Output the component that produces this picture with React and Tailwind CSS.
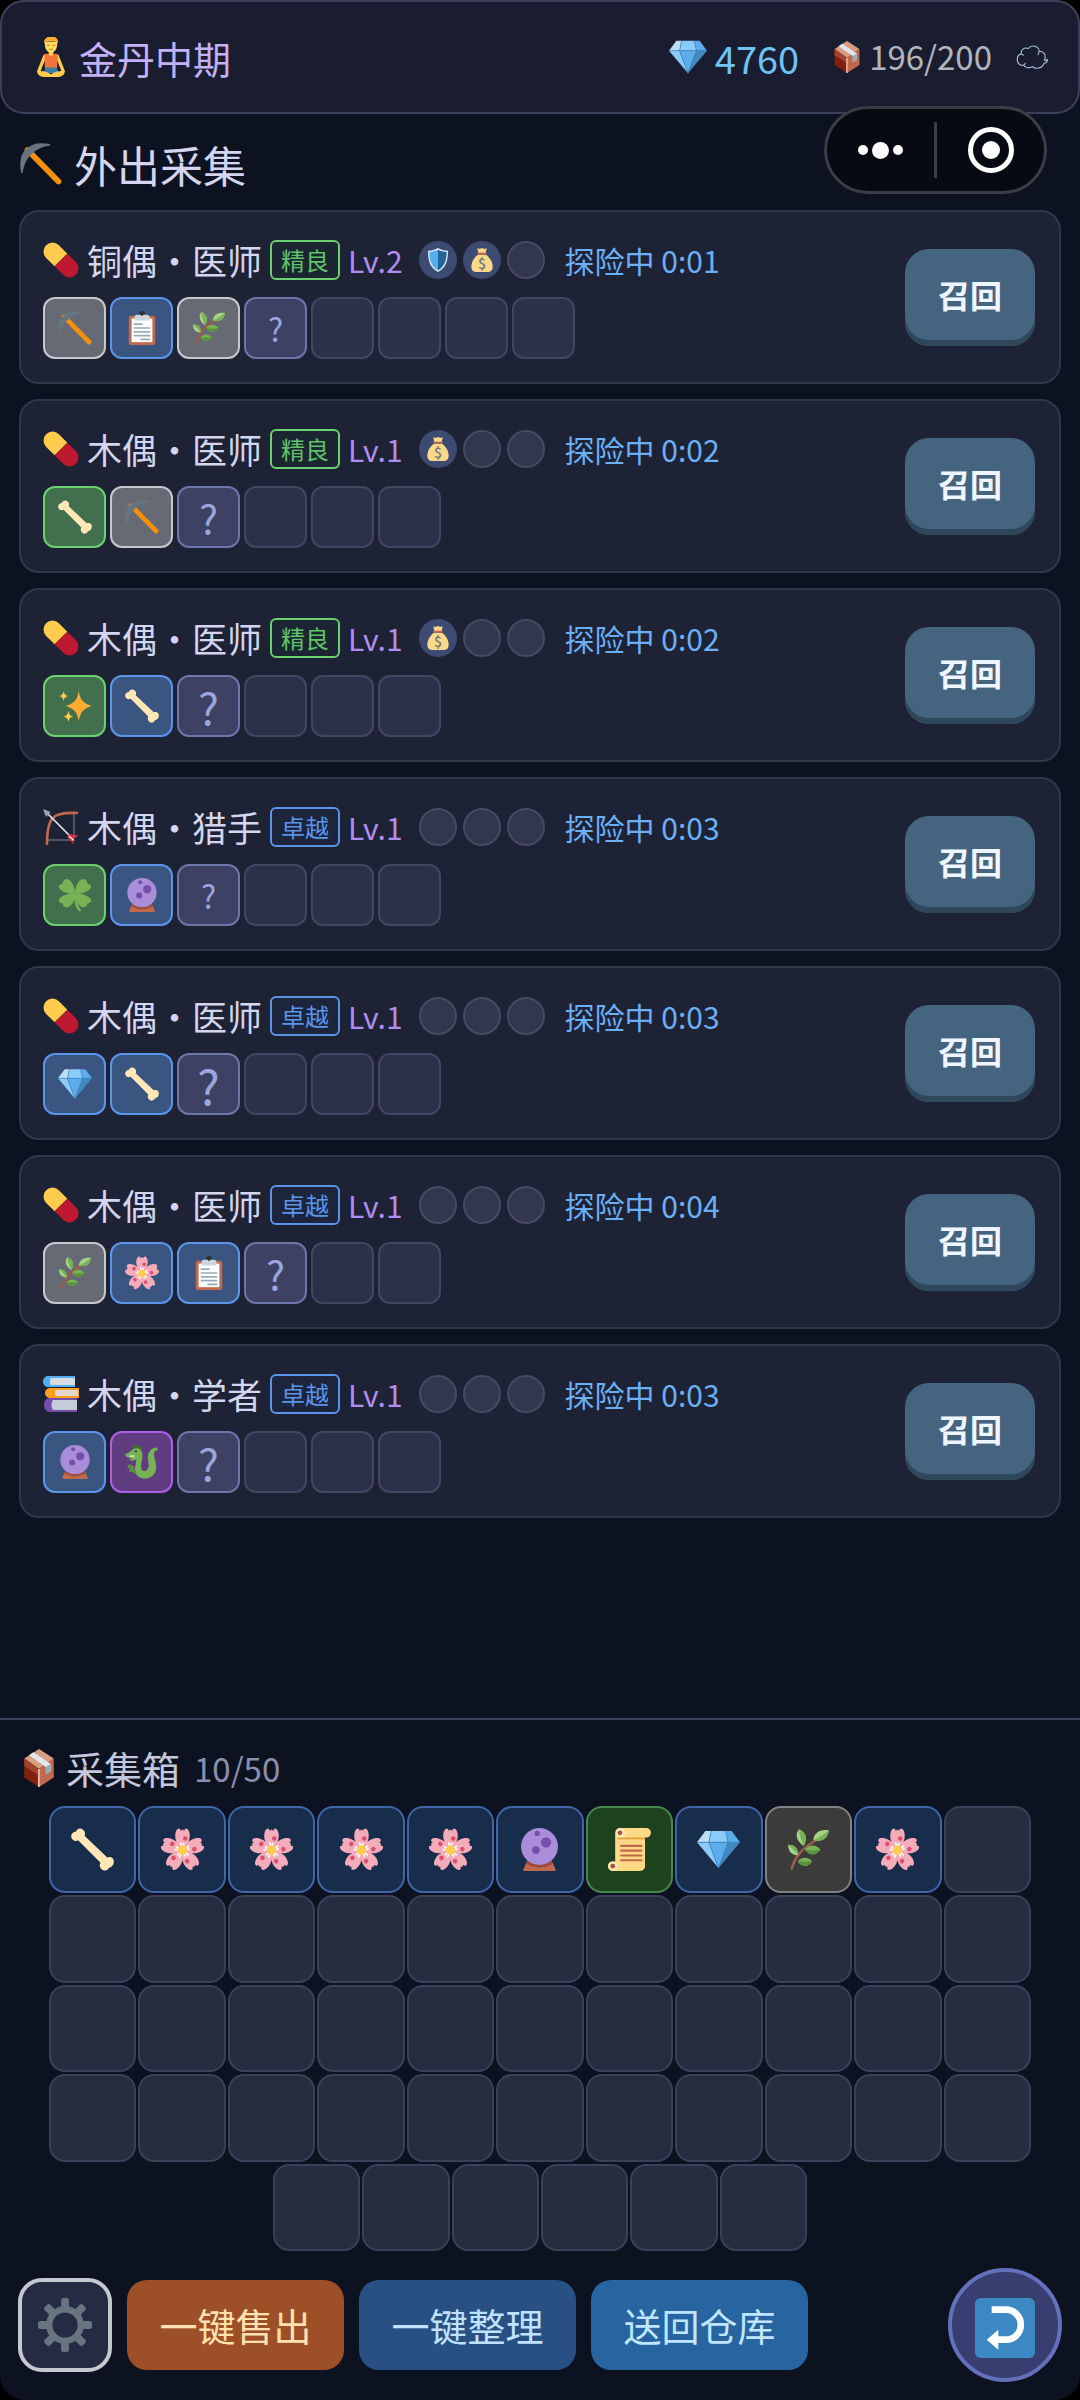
import React from "react";
import clsx from "clsx";

const PillIcon = () => (
  <g transform="rotate(45 18 18)">
    <path fill="#ffcc4d" d="M-3 18a9 9 0 0 1 9-9h12v18H6a9 9 0 0 1-9-9z" />
    <path fill="#be1931" d="M18 9h12a9 9 0 0 1 0 18H18z" />
  </g>
);

const PickaxeIcon = () => (
  <>
    <path stroke="#f4900c" strokeWidth="5" strokeLinecap="round" d="M6.500 6 33 33" />
    <path fill="#66757f" d="M25.500.9C17-.6 10.200.5 6.300 4.300L4.300 6.300C.5 10.200-.6 17 .9 25.500c.1.700 1.200.7 1.300 0 .9-6.200 3.300-11.300 6.500-14.700l2.100-2.100c3.400-3.200 8.500-5.600 14.700-6.500.7-.1.700-1.200 0-1.300z" />
  </>
);

const ClipboardIcon = () => (
  <>
    <rect x="4" y="5" width="28" height="31" rx="2" fill="#c1694f" />
    <path fill="#fff" d="M7 8h22v25H7z" />
    <circle cx="18" cy="3" r="3" fill="#292f33" />
    <circle cx="18" cy="2.500" r="1" fill="#99aab5" />
    <path fill="#ccd6dd" d="M13 4h10a3 3 0 0 1 3 3v3H10V7a3 3 0 0 1 3-3z" />
    <path fill="#292f33" d="M17 1h2v4h-2z" />
    <path stroke="#99aab5" strokeWidth="1.800" strokeLinecap="round" d="M10 14h8M10 18h16M10 22h16M10 26h16M17 30h9" />
  </>
);

const HerbIcon = () => (
  <>
    <path fill="none" stroke="#9d5b4a" strokeWidth="2.200" strokeLinecap="round" d="M4 34c3-11 9-17 22-25" />
    <path fill="#a6d388" d="M14 15C7 10 7 5 10 1c5 2 8 7 4 14zM22 10C23 3 29 1 35 2c-1 7-6 10-13 8zM9 23c-6-1-8-4-8-9 6 0 9 4 8 9z" />
    <path fill="#77b255" d="M14 15c-2-5-4-9-4-14 5 2 8 7 4 14zM22 10c5-2 9-5 13-8-1 7-6 10-13 8zM9 23c-2-4-5-6-8-9 6 0 9 4 8 9z" />
    <path fill="#77b255" d="M15 18c3-4 9-5 13 0-4 6-10 5-13 0z" />
    <path fill="#5c913b" d="M15 18c4 1 8 1 13 0-4 6-10 5-13 0z" />
    <path fill="#77b255" d="M9 28c3-4 9-4 12 0-3 5-9 5-12 0z" />
    <path fill="#5c913b" d="M9 28h12c-3 5-9 5-12 0z" />
  </>
);

const BoneIcon = () => (
  <path
    fill="#ffe8b6"
    d="M35.300 25.900c-1.300-1.800-3.400-1.900-4.900-1.200L11.300 6.500c.8-1.600.6-3.500-1-4.900C8.200-.3 5 .4 4.300 2.900 1.700 3.100-.4 5.400.3 8c.7 2.500 3.700 3.500 5.700 2.300L24.700 29c-1 1.700-.9 4.100 1.100 5.700 2.100 1.700 5.200.9 5.900-1.500 3-.2 5.200-4.100 3.600-7.300z"
  />
);

const SparklesIcon = () => (
  <>
    <path fill="#ffac33" d="M22 2c1.500 9 4 12.500 13.500 16C26 21.500 23.500 25 22 34c-1.500-9-4-12.500-13.500-16C18 14.500 20.500 11 22 2z" />
    <path fill="#ffcc4d" d="M6 2c.7 3.500 1.500 4.500 5 5.500-3.500 1-4.300 2-5 5.500-.7-3.500-1.500-4.500-5-5.500 3.500-1 4.300-2 5-5.500zM11 23c.7 4 1.700 5 5 6-3.300 1-4.300 2-5 6-.7-4-1.700-5-5-6 3.300-1 4.300-2 5-6z" />
  </>
);

const CloverIcon = () => (
  <>
    <path fill="none" stroke="#77b255" strokeWidth="2.600" strokeLinecap="round" d="M18 17c0 7 1 13 5 17" />
    <path fill="#77b255" d="M18 17C12 17 4 15 1 10c-.5-2 1-3.500 4-4 0-3 2-5 4.500-5C15 2 18 10 18 17zM18 17c6 0 14-2 17-7 .5-2-1-3.500-4-4 0-3-2-5-4.500-5C21 2 18 10 18 17zM18 17C12 16 4 18 1 23c-.5 2 1 3.500 4 4 0 3 2 4 4.500 4C15 30 18 24 18 17zM18 17c6-1 14 1 17 6 .5 2-1 3.500-4 4 0 3-2 4-4.500 4C21 30 18 24 18 17z" />
  </>
);

const OrbIcon = () => (
  <>
    <path fill="#c1694f" d="M8 27h20l3.500 7.500c.3.800-.2 1.500-1 1.500h-25c-.8 0-1.300-.7-1-1.500z" />
    <path fill="#9d4a3a" d="M8 27h20l1 3c-6 4-16 4-22 0z" />
    <circle cx="18" cy="15.500" r="15.500" fill="#aa8dd8" />
    <circle cx="23.500" cy="12" r="4.300" fill="#744eaa" />
    <circle cx="15" cy="18.500" r="3.200" fill="#744eaa" />
    <circle cx="16" cy="4.500" r="2.200" fill="#744eaa" />
  </>
);

const GemIcon = () => (
  <>
    <path fill="#bdddf4" d="M7 2.500h5L10 12H0z" />
    <path fill="#8ccaf7" d="M12 2.500h12L26 12H10z" />
    <path fill="#5dadec" d="M24 2.500h5L36 12H26z" />
    <path fill="#8ccaf7" d="M0 12h10l8 21.500z" />
    <path fill="#5dadec" d="M10 12h16l-8 21.500z" />
    <path fill="#4289c1" d="M26 12h10L18 33.500z" />
    <path fill="none" stroke="#3b88c3" strokeWidth=".7" d="M0 12h36M12 2.500 10 12l8 21.500L26 12l-2-9.500" />
  </>
);

const FlowerIcon = () => (
  <>
    {[0, 72, 144, 216, 288].map((deg) => (
      <g key={deg} transform={`rotate(${deg} 18 18.500)`}>
        <path fill="#f4abba" d="M18 18.500C13 14 11.500 9 12 5c.3-2.500 1.500-4.500 3-4.500 1 0 1.200 1 1.500 1.800L18 1.300l1.500 1c.3-.8.500-1.800 1.500-1.800 1.500 0 2.700 2 3 4.500.5 4-1 9-6 13.500z" />
        <path stroke="#fff" strokeWidth="1.400" strokeLinecap="round" d="M16.500 12.500 18 18M19 13l-1 5" />
        <circle cx="20.300" cy="8.800" r="1.900" fill="#dd4d6c" />
      </g>
    ))}
    <circle cx="18" cy="18.500" r="4" fill="#ffcc4d" />
  </>
);

const ScrollIcon = () => (
  <>
    <path fill="#ffd983" d="M6 4a4 4 0 0 1 4-4h22a4 4 0 0 1 0 8h-1v24a4 4 0 0 1-4 4H4a4 4 0 0 1 0-8h2z" />
    <path fill="#e39f3d" d="M8 8h23v1.500H8z" />
    <circle cx="4" cy="32" r="4" fill="#ffe8b6" />
    <circle cx="4" cy="32" r="2" fill="#a0584a" />
    <circle cx="10.500" cy="4" r="4" fill="#ffe8b6" />
    <circle cx="10" cy="4" r="2" fill="#a0584a" />
    <path stroke="#c1694f" strokeWidth="1.800" strokeLinecap="round" d="M11 15h17M11 19h17M11 23h17M11 27h17" />
  </>
);

const DragonIcon = () => (
  <>
    <path fill="none" stroke="#3e721d" strokeWidth="2.400" strokeLinejoin="round" d="M9 5l1-4 3 2 3-1 1 3" />
    <path fill="#77b255" d="M0 10C3 9 5 7 8 5c5-3.500 10-1 10.500 5 .4 5-2 9-1.500 14 .4 3 3 4.500 5.500 3 3-2 3-6 2-10-1-5 0-11 6-14 2-1 4 0 4.500 2-4 1-5 4-4 8 3 10 3 17-4 21-6 3.500-14 1-16-5-1.500-5 1-9 1-14-2 1.500-5 2-8 1l4-2c-4 0-7-1-8-4z" />
    <path fill="#5c913b" d="M5 20l5 3-1 3 3 1-1 4-4-3-3 1 1-4-3-2z" />
    <path fill="#fff" d="M5 11h5l-1 2.500-1.500-2L6.500 13.500z" />
    <path fill="#292f33" d="M9 6.500l4-1-1 2.500z" />
  </>
);

const BowIcon = () => (
  <>
    <path fill="none" stroke="#9aa5ad" strokeWidth=".8" d="M31 4v24M4 31h26" />
    <path fill="none" stroke="#c1694f" strokeWidth="2.600" strokeLinecap="round" d="M34 4C20 3.500 13 5 10 9c-4 4-6 12-6 26" />
    <path stroke="#dfe6ea" strokeWidth="1.700" d="M3 3l27 27" />
    <path fill="#99aab5" d="M0 0l7.500 3L3 8z" />
    <path fill="#dd2e44" d="M25 26l2-1 3 1 5.500.5-5 3.500-.500 5-3-4-3-3z" />
    <path stroke="#fff" strokeWidth="1.200" d="M26 27l5 4.500" />
  </>
);

const BooksIcon = () => (
  <>
    <path fill="#55acee" d="M5 0h27v11H5C2 11 0 8.500 0 5.500S2 0 5 0z" />
    <path fill="#d3dde3" d="M8 2h24v7H8c-1.500-2-1.500-5 0-7z" />
    <path fill="#ff9d1c" d="M7 12h29v10H7c-3 0-5-2.500-5-5s2-5 5-5z" />
    <path fill="#e1d8d0" d="M13 14h22v6H13c-1.500-1.500-1.500-4.500 0-6z" />
    <path fill="#744eaa" d="M7 22h27v14H7c-4 0-6-3.500-6-7s2-7 6-7z" />
    <path fill="#c3ccd8" d="M10 24h24v10H10c-2-2.500-2-7.500 0-10z" />
  </>
);

const BoxIcon = () => (
  <>
    <path fill="#d99e82" d="M18 0l14 9-14 10L4 9z" />
    <path fill="#80210f" d="M4 9l14 10v17L4 27z" />
    <path fill="#c1694f" d="M32 9L18 19v17l14-9z" />
    <path fill="#a3432d" d="M4 9l14 10v6L4 16z" />
    <path fill="#e8b59f" d="M17 19h1.800v17H17z" />
    <path fill="#e1e8ed" d="M8.500 6l4-3L29 14v7l-4.500 3v-7z" />
    <path fill="#99aab5" d="M24.500 17 29 14v7l-4.500 3z" />
  </>
);

const MeditateIcon = () => (
  <>
    <path fill="none" stroke="#ffcc4d" strokeWidth="3" strokeLinecap="round" strokeLinejoin="round" d="M12.500 17 8.500 27l-1.500 4M23.500 17l4 10 1.500 4" />
    <path fill="#f4733d" d="M12 15.500c2-1 10-1 12 0l-.5 13h-11z" />
    <path fill="#ffcc4d" d="M16 11h4v4a2 2 0 0 1-4 0z" />
    <path fill="#ffdc5d" d="M12.500 4h11v3c0 4-2.500 7-5.500 7s-5.500-3-5.500-7z" />
    <path fill="#ffac33" d="M12 6c-1-4 2-6.500 6.500-6.500S25 2.500 24 6c-1-2-2-2.500-6-2.500S13 4 12 6z" />
    <path stroke="#d5713b" strokeWidth=".8" strokeLinecap="round" d="M14.500 7.500h2M19.500 7.500h2M16.500 11h3" />
    <path fill="#3b7ba5" d="M13 27.500h10l2 5H11z" />
    <path fill="#ffcc4d" d="M6 31c3-1 8 0 12 2.500 4-2.500 9-3.500 12-2.500 1 3-3 5-7 5H13c-4 0-8-2-7-5z" />
  </>
);

const ShieldIcon = () => (
  <>
    <path fill="#d5eaf7" d="M18 0c4 2.500 9 3.700 15 4 0 15-3 26-15 32C6 30 3 19 3 4c6-.3 11-1.500 15-4z" />
    <path fill="#55acee" d="M18 2.500v31C8 28 5.300 18 5 6c5-.4 9-1.500 13-3.500z" />
    <path fill="#226699" d="M18 2.500v31C28 28 30.700 18 31 6c-5-.4-9-1.500-13-3.500z" />
  </>
);

const MoneyIcon = () => (
  <>
    <path fill="#fdd888" d="M12 10h12c7 5 10 12 10 18 0 5-3 8-8 8H10c-5 0-8-3-8-8 0-6 3-13 10-18z" />
    <path fill="#fdd888" d="M11 0l3 1.500L18 0l4 1.500L25 0l-1.500 8h-11z" />
    <path fill="#bf6952" d="M11 7h14v3H11z" />
    <text x="18" y="31" textAnchor="middle" fontSize="21" fontWeight="500" fill="#67757f">
      $
    </text>
  </>
);

const CloudIcon = () => (
  <path
    fill="none"
    stroke="#a9c3dc"
    strokeWidth="1.200"
    strokeLinecap="round"
    d="M5 27C0 24 0 16 6 14.500c-1-5 4-8 8-6 3-5 12-3 12 3 6 0 8 5 6 10 1 0 2.500.2 3.500-.5-.5 3-2 4-4 4-2 6-9 7-13 4-4 2-9 1-10-2-1.500.6-2.500.5-3.500 0M6 14.500c1 .3 2 .8 2.500 1.500M26 11.500c0 2-.5 3-1.500 4M8.500 27c1-.5 1.500-1 2-2"
  />
);

const GearIcon = () => (
  <>
    {[0, 45, 90, 135, 180, 225, 270, 315].map((deg) => (
      <rect key={deg} x="15.400" y="0" width="5.200" height="9" rx="1.500" fill="#66757f" transform={`rotate(${deg} 18 18)`} />
    ))}
    <circle cx="18" cy="18" r="10.500" fill="none" stroke="#66757f" strokeWidth="4.200" />
  </>
);

const ReturnIcon = () => (
  <>
    <rect width="36" height="36" rx="3.500" fill="#3b88c3" />
    <path fill="none" stroke="#fff" strokeWidth="4" d="M10 7h8.500a9 9 0 0 1 0 18H13" />
    <path fill="#fff" d="M14 19v12L7 25z" />
  </>
);

const icons = {
  pill: PillIcon,
  pickaxe: PickaxeIcon,
  clipboard: ClipboardIcon,
  herb: HerbIcon,
  bone: BoneIcon,
  sparkles: SparklesIcon,
  clover: CloverIcon,
  orb: OrbIcon,
  gem: GemIcon,
  flower: FlowerIcon,
  scroll: ScrollIcon,
  dragon: DragonIcon,
  bow: BowIcon,
  books: BooksIcon,
  box: BoxIcon,
  meditate: MeditateIcon,
  shield: ShieldIcon,
  money: MoneyIcon,
  cloud: CloudIcon,
  gear: GearIcon,
  back: ReturnIcon,
};

const Icon = ({ name, className }) => {
  const Shape = icons[name];
  return (
    <svg viewBox="0 0 36 36" className={clsx("shrink-0", className)} aria-hidden="true">
      <Shape />
    </svg>
  );
};

// rarity colours of the small loot slots
const slotStyle = {
  gray: "bg-[#666a74] border-[#c6c8cd]",
  green: "bg-[#42704f] border-[#6bd070]",
  blue: "bg-[#3a5680] border-[#5b95ea]",
  purple: "bg-[#5f3d80] border-[#b05ee8]",
  next: "bg-[#3d4163] border-[#6a77a8]",
  empty: "bg-[#2c3049] border-[#434660]",
};

const boxStyle = {
  gray: "bg-[#3b3b3b] border-[#808284]",
  green: "bg-[#1e421e] border-[#448a4c]",
  blue: "bg-[#182c4c] border-[#3e66a8]",
  empty: "bg-[#282c41] border-[#3c4059]",
};

const badgeStyle = {
  精良: "border-[#6bd070] text-[#5fc466] bg-[#1b2632]",
  卓越: "border-[#5b95ea] text-[#5b95ea] bg-[#1c253c]",
};

const dolls = [
  { icon: "pill", name: "铜偶・医师", rank: "精良", level: 2, perks: ["shield", "money"], time: "0:01", size: 8, mark: "text-[32px]", loot: [["pickaxe", "gray"], ["clipboard", "blue"], ["herb", "gray"]] },
  { icon: "pill", name: "木偶・医师", rank: "精良", level: 1, perks: ["money"], time: "0:02", size: 6, mark: "text-[40px]", loot: [["bone", "green"], ["pickaxe", "gray"]] },
  { icon: "pill", name: "木偶・医师", rank: "精良", level: 1, perks: ["money"], time: "0:02", size: 6, mark: "text-[44px]", loot: [["sparkles", "green"], ["bone", "blue"]] },
  { icon: "bow", name: "木偶・猎手", rank: "卓越", level: 1, perks: [], time: "0:03", size: 6, mark: "text-[32px]", loot: [["clover", "green"], ["orb", "blue"]] },
  { icon: "pill", name: "木偶・医师", rank: "卓越", level: 1, perks: [], time: "0:03", size: 6, mark: "text-[48px]", loot: [["gem", "blue"], ["bone", "blue"]] },
  { icon: "pill", name: "木偶・医师", rank: "卓越", level: 1, perks: [], time: "0:04", size: 6, mark: "text-[40px]", loot: [["herb", "gray"], ["flower", "blue"], ["clipboard", "blue"]] },
  { icon: "books", name: "木偶・学者", rank: "卓越", level: 1, perks: [], time: "0:03", size: 6, mark: "text-[44px]", loot: [["orb", "blue"], ["dragon", "purple"]] },
];

const storage = [
  ["bone", "blue"],
  ["flower", "blue"],
  ["flower", "blue"],
  ["flower", "blue"],
  ["flower", "blue"],
  ["orb", "blue"],
  ["scroll", "green"],
  ["gem", "blue"],
  ["herb", "gray"],
  ["flower", "blue"],
];
const capacity = 50;

const Perk = ({ icon }) =>
  icon ? (
    <li className="size-[38px] rounded-full bg-[#3d4b72] flex items-center justify-center">
      <Icon name={icon} className="size-6" />
    </li>
  ) : (
    <li className="size-[38px] rounded-full border-2 border-[#464a63] bg-[#33374d]"></li>
  );

const Slot = ({ variant, children }) => (
  <li className={clsx("w-[63px] h-[62px] rounded-xl border-2 flex items-center justify-center", slotStyle[variant])}>
    {children}
  </li>
);

const DollCard = ({ doll }) => {
  const rest = doll.size - doll.loot.length - 1;
  return (
    <li className="h-[174px] rounded-[20px] border-2 border-[#32364c] bg-[#1e2235] pl-[22px] pr-6 flex items-center justify-between">
      <div className="flex flex-col gap-[17px] pt-1">
        <div className="flex items-center gap-2 h-10">
          <Icon name={doll.icon} className="size-9" />
          <h2 className="text-[35px] leading-10 text-[#d3d6ee]">{doll.name}</h2>
          <span className={clsx("h-10 w-[70px] rounded-md border-2 text-2xl leading-9 text-center", badgeStyle[doll.rank])}>
            {doll.rank}
          </span>
          <span className="text-[30px] leading-10 text-[#b08df0]">Lv.{doll.level}</span>
          <ul className="flex gap-1.5 ml-2">
            {[0, 1, 2].map((i) => (
              <Perk key={i} icon={doll.perks[i]} />
            ))}
          </ul>
          <span className="text-[30px] leading-10 text-[#6bb0f5] ml-3">探险中 {doll.time}</span>
        </div>
        <ul className="flex gap-1">
          {doll.loot.map(([icon, rarity], i) => (
            <Slot key={i} variant={rarity}>
              <Icon name={icon} className="size-[34px]" />
            </Slot>
          ))}
          <Slot variant="next">
            <span className={clsx("leading-none text-[#9aa6dc]", doll.mark)}>?</span>
          </Slot>
          {Array.from({ length: rest }, (_, i) => (
            <Slot key={i} variant="empty" />
          ))}
        </ul>
      </div>
      <button className="w-[130px] h-[97px] pb-1.5 rounded-3xl bg-[#45647f] shadow-[inset_0_-6px_0_#2f475b] text-[32px] font-bold text-[#f0f6ff]">
        召回
      </button>
    </li>
  );
};

const App = () => {
  return (
    <div className="bg-black">
      <div className='relative min-h-screen flex flex-col rounded-3xl bg-[#0d1220] font-["Noto_Sans_CJK_SC",sans-serif]'>
        <header className="h-[114px] rounded-3xl border-2 border-[#3c3f59] bg-[#191d2f] pl-[29px] pr-[30px] flex items-center justify-between">
          <div className="flex items-center gap-2 text-[38px] text-[#c4b0f5]">
            <Icon name="meditate" className="size-10" />
            <span>金丹中期</span>
          </div>
          <div className="flex items-center gap-6">
            <div className="flex items-center gap-2 text-[38px] text-[#6fc3f5]">
              <Icon name="gem" className="size-[38px]" />
              <span>4760</span>
            </div>
            <div className="flex items-center gap-1.5 text-[33px] text-[#b3b5bd] ml-2">
              <Icon name="box" className="size-8" />
              <span>196/200</span>
            </div>
            <Icon name="cloud" className="size-8" />
          </div>
        </header>

        {/* Host app capsule */}
        <div className="absolute top-[106px] right-[33px] w-[223px] h-[88px] rounded-full border-3 border-[#3b3d47] bg-[#070a12] flex items-center">
          <button aria-label="更多" className="flex-1 flex items-center justify-center gap-1">
            <span className="size-2.5 rounded-full bg-white"></span>
            <span className="size-[17px] rounded-full bg-white"></span>
            <span className="size-2.5 rounded-full bg-white"></span>
          </button>
          <span className="w-[3px] h-14 bg-[#3b3d47]"></span>
          <button aria-label="关闭" className="flex-1 flex items-center justify-center">
            <span className="size-[46px] rounded-full border-5 border-white flex items-center justify-center">
              <span className="size-[18px] rounded-full bg-white"></span>
            </span>
          </button>
        </div>

        <main>
          <h1 className="flex items-center gap-3 px-5 pt-[22px] pb-[18px] text-[43px] leading-14 text-[#d3d6ee]">
            <Icon name="pickaxe" className="size-[42px]" />
            外出采集
          </h1>
          <ul className="flex flex-col gap-[15px] px-[19px]">
            {dolls.map((doll, i) => (
              <DollCard key={i} doll={doll} />
            ))}
          </ul>
        </main>

        <section className="mt-auto border-t-2 border-[#3c3f59]">
          <div className="flex items-center gap-2 px-5 pt-[22px] pb-3 text-[#c4c8dd]">
            <Icon name="box" className="size-[38px]" />
            <h2 className="text-[38px] leading-[52px]">采集箱</h2>
            <span className="text-[33px] leading-[52px] text-[#8b8fac] ml-1.5">
              {storage.length}/{capacity}
            </span>
          </div>
          {/* 11 per row, the last six sit in the middle */}
          <ul className="grid grid-cols-[repeat(22,minmax(0,1fr))] gap-0.5 px-[49px]">
            {Array.from({ length: capacity }, (_, i) => {
              const [icon, rarity] = storage[i] || [];
              return (
                <li
                  key={i}
                  className={clsx(
                    "col-span-2 aspect-square rounded-2xl border-2 flex items-center justify-center",
                    boxStyle[rarity || "empty"],
                    i === 44 && "col-start-6"
                  )}
                >
                  {icon && <Icon name={icon} className="size-[43px]" />}
                </li>
              );
            })}
          </ul>
        </section>

        <footer className="flex items-center gap-[15px] pt-[17px] pb-[18px] px-[18px] text-[38px]">
          <button aria-label="设置" className="size-[94px] rounded-3xl border-4 border-[#c5c8cf] bg-[#262b44] flex items-center justify-center">
            <Icon name="gear" className="size-[54px]" />
          </button>
          <button className="w-[217px] h-[90px] pb-0.5 rounded-[20px] bg-[#9d5028] text-[#ffe2b0]">一键售出</button>
          <button className="w-[217px] h-[90px] pb-0.5 rounded-[20px] bg-[#285083] text-[#bfe2ff]">一键整理</button>
          <button className="w-[217px] h-[90px] pb-0.5 rounded-[20px] bg-[#2764a0] text-[#bfe6ff]">送回仓库</button>
          <button aria-label="返回" className="ml-auto size-[114px] pt-1.5 rounded-full border-4 border-[#6371bd] bg-[#393e70] flex items-center justify-center">
            <Icon name="back" className="size-[60px]" />
          </button>
        </footer>
      </div>
    </div>
  );
};

export default App;
